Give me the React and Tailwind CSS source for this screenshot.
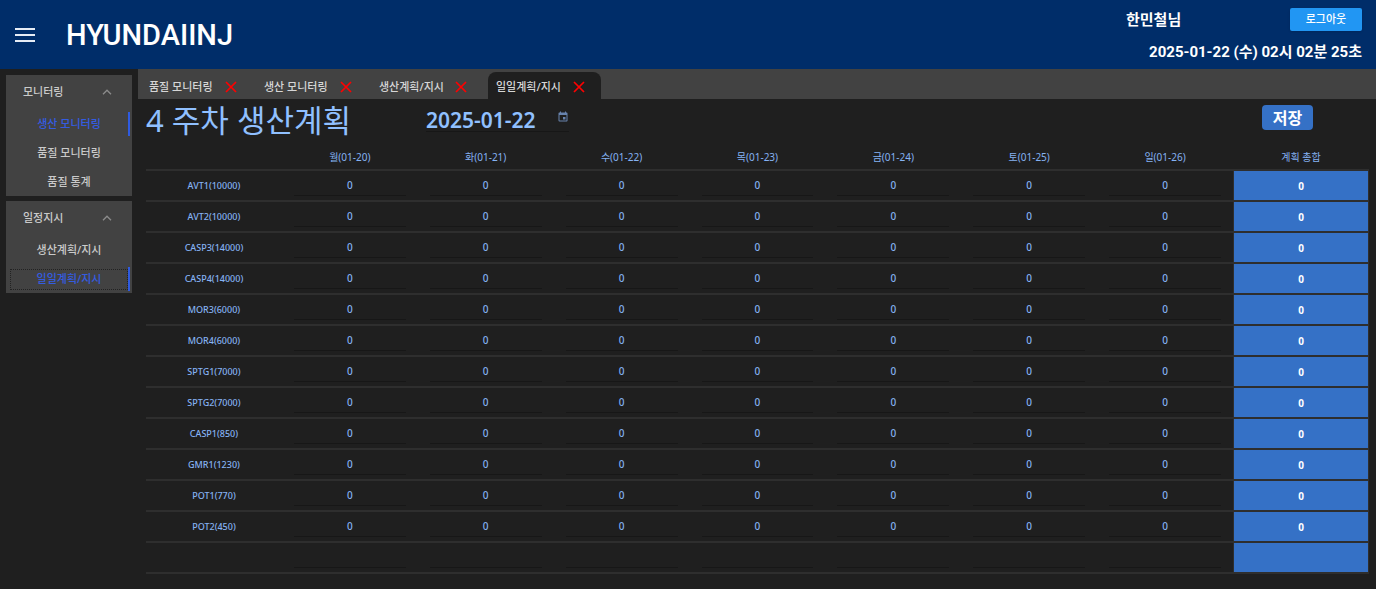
import { useState } from "react";
import { MdEvent } from "react-icons/md";

const KR = "font-['Noto_Sans','Noto_Sans_CJK_KR',sans-serif]";
const ROBOTO = "font-['Roboto','Noto_Sans_CJK_KR',sans-serif]";

const menus = [
  {
    title: "모니터링",
    items: [
      { label: "생산 모니터링", active: true },
      { label: "품질 모니터링" },
      { label: "품질 통계" },
    ],
  },
  {
    title: "일정지시",
    items: [
      { label: "생산계획/지시" },
      { label: "일일계획/지시", active: true, focused: true },
    ],
  },
];

const tabs = ["품질 모니터링", "생산 모니터링", "생산계획/지시", "일일계획/지시"];

const days = [
  "월(01-20)",
  "화(01-21)",
  "수(01-22)",
  "목(01-23)",
  "금(01-24)",
  "토(01-25)",
  "일(01-26)",
];

const products = [
  "AVT1(10000)",
  "AVT2(10000)",
  "CASP3(14000)",
  "CASP4(14000)",
  "MOR3(6000)",
  "MOR4(6000)",
  "SPTG1(7000)",
  "SPTG2(7000)",
  "CASP1(850)",
  "GMR1(1230)",
  "POT1(770)",
  "POT2(450)",
  "",
];

function Header() {
  return (
    <header className={`${ROBOTO} flex h-[69px] items-center bg-[#002d69] pr-3.5 pl-[15px] text-white`}>
      <button type="button" aria-label="메뉴" className="flex h-7 w-5 items-center justify-center">
        <svg viewBox="0 0 20 14" className="h-3.5 w-5" fill="#e6ecf5" aria-hidden="true">
          <path d="M0 0h20v2H0zM0 6h20v2H0zM0 12h20v2H0z" />
        </svg>
      </button>
      <h1 className="ml-[31px] text-[29px] leading-8 font-medium">HYUNDAIINJ</h1>
      <div className="ml-auto flex w-60 flex-col gap-2 pt-0.5">
        <div className="flex items-center justify-between">
          <span className="pl-1 text-[15px] leading-6 font-bold">한민철님</span>
          <button
            type="button"
            className="h-[23px] w-[72px] rounded-xs bg-[#2196f3] text-[11px] leading-4 font-medium shadow"
          >
            로그아웃
          </button>
        </div>
        <p className="text-right text-[15px] leading-6 font-bold">2025-01-22 (수) 02시 02분 25초</p>
      </div>
    </header>
  );
}

function Sidebar() {
  return (
    <nav className="flex w-[138px] shrink-0 flex-col gap-[5px] p-1.5 font-medium">
      {menus.map((menu) => (
        <section key={menu.title} className="bg-[#424242] text-[11px] text-[#cacaca]">
          <button type="button" className="flex h-[34px] w-full items-center justify-between pr-5 pl-[17px]">
            <span>{menu.title}</span>
            <svg viewBox="0 0 10 6" className="h-1.5 w-2.5" fill="none" stroke="#8c8c8c" strokeWidth="1.3" aria-hidden="true">
              <path d="M1 5.2 5 1.2l4 4" />
            </svg>
          </button>
          <ul>
            {menu.items.map((item) => (
              <li key={item.label} className="flex h-[29px] items-center pt-px pr-0.5 pl-1">
                <a
                  href="#"
                  className={`flex h-[21px] flex-1 items-center justify-center border border-dotted ${
                    item.focused ? "border-[#222]" : "border-transparent"
                  } ${item.active ? "text-[#345ce0]" : ""}`}
                >
                  {item.label}
                </a>
                <span className={`h-6 w-0.5 ${item.active ? "bg-[#2f5be0]" : ""}`} />
              </li>
            ))}
          </ul>
        </section>
      ))}
    </nav>
  );
}

function TabBar() {
  return (
    <div className="flex h-[30px] items-end bg-[#424242] text-[11px] font-medium text-[#d6d6d6]">
      {tabs.map((tab, i) => {
        const active = i === tabs.length - 1;
        return (
          <div
            key={tab}
            className={`flex h-[27px] items-center justify-between pt-[3px] ${
              active ? "ml-[5px] w-[113px] rounded-t-lg bg-[#1f1f1f] pr-4 pl-2" : "w-[115px] pr-4 pl-[11px]"
            }`}
          >
            <button type="button" className="whitespace-nowrap">
              {tab}
            </button>
            <button type="button" aria-label={`${tab} 닫기`} className="flex">
              <svg viewBox="0 0 12 12" className="h-3 w-3" stroke="#ff0000" strokeWidth="1.7" aria-hidden="true">
                <path d="M1 1 11 11M11 1 1 11" />
              </svg>
            </button>
          </div>
        );
      })}
    </div>
  );
}

function PlanTable() {
  const [plan, setPlan] = useState(() =>
    products.map((name) => days.map(() => (name ? "0" : "")))
  );
  const update = (r, c, value) =>
    setPlan((rows) => rows.map((row, i) => (i === r ? row.map((v, j) => (j === c ? value : v)) : row)));

  return (
    <table className="w-full table-fixed border-separate border-spacing-0 text-center text-[10px] leading-4 text-[#85b2f2]">
      <thead>
        <tr className="h-[27px]">
          <td className="border-b-2 border-[#2e2e2e] p-0" />
          {[...days, "계획 총합"].map((d) => (
            <th key={d} scope="col" className="border-b-2 border-[#2e2e2e] p-0 font-normal">
              {d}
            </th>
          ))}
        </tr>
      </thead>
      <tbody>
        {products.map((name, r) => (
          <tr key={r} className="h-[31px]">
            <th scope="row" className="border-b-2 border-[#2e2e2e] p-0 text-[9px] font-medium">
              {name}
            </th>
            {days.map((d, c) => (
              <td key={d} className="border-b-2 border-[#2e2e2e] px-3 py-0">
                <input
                  type="text"
                  aria-label={`${name || "합계"} ${d}`}
                  value={plan[r][c]}
                  onChange={(e) => update(r, c, e.target.value)}
                  className="block h-5 w-full border-b border-[#171717] bg-transparent text-center font-medium outline-none"
                />
              </td>
            ))}
            <td className="border-x border-b-2 border-[#2e2e2e] bg-[#3571c6] bg-clip-padding p-0 font-bold text-white">
              {name ? "0" : ""}
            </td>
          </tr>
        ))}
      </tbody>
    </table>
  );
}

export default function App() {
  const [date, setDate] = useState("2025-01-22");

  return (
    <div className={`${KR} flex min-h-screen flex-col bg-[#1f1f1f]`}>
      <Header />
      <div className="flex flex-1">
        <Sidebar />
        <main className="min-w-0 flex-1">
          <TabBar />
          <div className="pr-[7px] pl-2">
            <div className="flex h-[45px] items-center pb-1 text-[#90c0ff]">
              <h2 className="w-[280px] text-[31px] leading-10 whitespace-nowrap">4 주차 생산계획</h2>
              <div className="flex h-6 w-[143px] items-center border-b border-[#171717] pt-0.5">
                <input
                  type="text"
                  aria-label="계획 날짜"
                  value={date}
                  onChange={(e) => setDate(e.target.value)}
                  className="min-w-0 flex-1 bg-transparent text-[21px] leading-6 font-semibold outline-none"
                />
                <button type="button" aria-label="달력 열기" className="mb-1.5 text-[#6883ad]">
                  <MdEvent className="h-3 w-3" />
                </button>
              </div>
              <button
                type="button"
                className="mr-14 mb-1 ml-auto h-[25px] w-[51px] rounded-sm bg-[#3571c6] text-base leading-6 font-bold text-white"
              >
                저장
              </button>
            </div>
            <PlanTable />
          </div>
        </main>
      </div>
    </div>
  );
}
